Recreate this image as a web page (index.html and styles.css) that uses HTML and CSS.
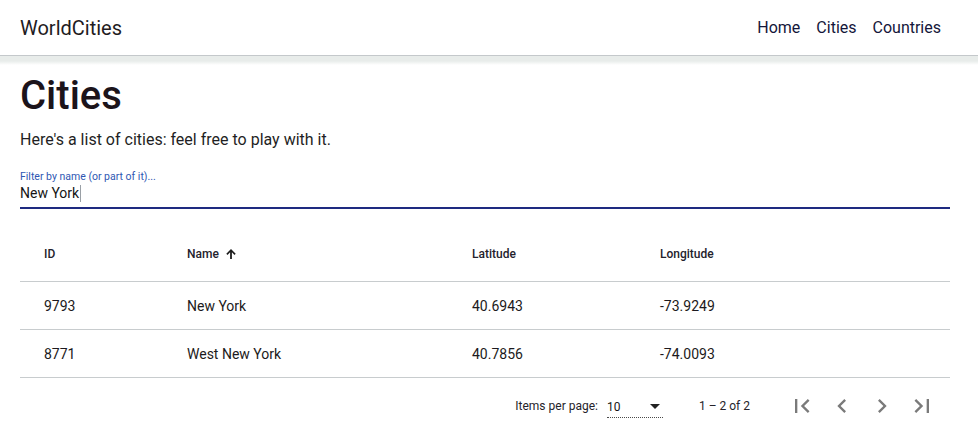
FILE: index.html
```html
<!DOCTYPE html>
<html lang="en">
<head>
<meta charset="utf-8">
<title>WorldCities</title>
<link rel="stylesheet" href="styles.css">
</head>
<body>
<header class="toolbar">
  <div class="brand">WorldCities</div>
  <nav class="nav">
    <a class="nav-link" href="#">Home</a>
    <a class="nav-link" href="#">Cities</a>
    <a class="nav-link" href="#">Countries</a>
  </nav>
</header>
<main class="content">
  <h1 class="title">Cities</h1>
  <p class="lead">Here's a list of cities: feel free to play with it.</p>
  <div class="field">
    <div class="field-label">Filter by name (or part of it)...</div>
    <div class="field-input">New York<span class="caret"></span></div>
  </div>
  <table class="grid">
    <colgroup>
      <col class="c-id"><col class="c-name"><col class="c-lat"><col class="c-lon">
    </colgroup>
    <thead>
      <tr>
        <th>ID</th>
        <th><span class="sort">Name<svg class="sort-arrow" viewBox="0 0 12 12" width="12" height="12"><path d="M6 1 L1.3 5.7 L2.5 6.9 L5.1 4.3 V11 H6.9 V4.3 L9.5 6.9 L10.7 5.7 Z" fill="#1d1d1d"/></svg></span></th>
        <th>Latitude</th>
        <th>Longitude</th>
      </tr>
    </thead>
    <tbody>
      <tr><td>9793</td><td>New York</td><td>40.6943</td><td>-73.9249</td></tr>
      <tr><td>8771</td><td>West New York</td><td>40.7856</td><td>-74.0093</td></tr>
    </tbody>
  </table>
  <div class="paginator">
    <span class="pg-label">Items per page:</span>
    <div class="pg-select"><span>10</span><span class="pg-arrow"></span></div>
    <span class="pg-range">1 – 2 of 2</span>
    <button class="pg-btn" aria-label="First page"><svg viewBox="0 0 24 24" width="28" height="28"><path d="M18.41 16.59L13.82 12l4.59-4.59L17 6l-6 6 6 6zM6 6h2v12H6z"/></svg></button>
    <button class="pg-btn" aria-label="Previous page"><svg viewBox="0 0 24 24" width="28" height="28"><path d="M15.41 7.41L14 6l-6 6 6 6 1.41-1.41L10.83 12z"/></svg></button>
    <button class="pg-btn" aria-label="Next page"><svg viewBox="0 0 24 24" width="28" height="28"><path d="M10 6L8.59 7.41 13.17 12l-4.58 4.59L10 18l6-6z"/></svg></button>
    <button class="pg-btn" aria-label="Last page"><svg viewBox="0 0 24 24" width="28" height="28"><path d="M5.59 7.41L10.18 12l-4.59 4.59L7 18l6-6-6-6zM16 6h2v12h-2z"/></svg></button>
  </div>
</main>
</body>
</html>
```
FILE: styles.css
```css
* { box-sizing: border-box; }
html, body { margin: 0; padding: 0; background: #fff; }
body {
  font-family: Roboto, "Liberation Sans", Arial, sans-serif;
  color: #1f1c22;
}
.toolbar {
  position: relative;
  height: 56px;
  display: flex;
  align-items: center;
  justify-content: space-between;
  padding: 0 37px 0 20px;
  border-bottom: 1px solid #c4c8cb;
}
.toolbar::after {
  content: "";
  position: absolute;
  left: 0; right: 0; top: 56px;
  height: 9px;
  background: linear-gradient(#e8ecea 0, #e8ecea 55%, rgba(232,236,234,0) 100%);
}
.brand { font-size: 20px; line-height: 24px; }
.nav { display: flex; gap: 16px; }
.nav-link { font-size: 16px; line-height: 24px; color: #14163a; text-decoration: none; }
.content { padding: 0 28px 0 20px; }
.title {
  font-size: 40px; font-weight: 500; line-height: 48px;
  margin: 16px 0 8px; color: #1c141b;
}
.lead { font-size: 16px; line-height: 24px; margin: 0 0 19px; color: #1f1f24; }
.field-label { font-size: 10.5px; line-height: 12px; color: #2f57b3; }
.field-input {
  margin-top: 2px;
  font-size: 14px; line-height: 17px;
  padding-bottom: 5px;
  border-bottom: 2px solid #1e2a80;
  color: #151515;
}
.caret { display: inline-block; width: 1px; height: 17px; background: #9aa0a6; vertical-align: top; margin-left: 1px; }
.grid {
  width: 100%;
  margin-top: 17px;
  border-collapse: separate;
  border-spacing: 0;
  table-layout: fixed;
}
.c-id { width: 167px; }
.c-name { width: 285px; }
.c-lat { width: 188px; }
.c-lon { width: 290px; }
.grid th, .grid td {
  text-align: left;
  padding: 0;
  border-bottom: 1px solid #c8ccce;
  vertical-align: middle;
}
.grid th:first-child, .grid td:first-child { padding-left: 24px; }
.grid th:last-child, .grid td:last-child { padding-right: 24px; }
.grid th { height: 56px; font-size: 12px; font-weight: 500; color: #24222c; }
.grid td { height: 48px; font-size: 14px; color: #1c1a20; }
.sort { display: inline-flex; align-items: center; }
.sort-arrow { margin-left: 6px; }
.paginator {
  display: flex;
  justify-content: flex-end;
  align-items: center;
  height: 56px;
  padding: 0 8px;
  font-size: 12px;
  color: #25232a;
}
.pg-label { margin-right: 9px; }
.pg-select {
  width: 56px;
  display: flex;
  align-items: center;
  justify-content: space-between;
  padding: 4px 3px 3px 0;
  margin-top: 1px;
  border-bottom: 1px dotted #4a4a4a;
  line-height: 14px;
  color: #151515;
}
.pg-arrow {
  width: 0; height: 0;
  border-left: 5px solid transparent;
  border-right: 5px solid transparent;
  border-top: 5px solid #222;
}
.pg-range { margin: 0 32px 0 36px; }
.pg-btn {
  width: 40px; height: 40px;
  padding: 0; border: 0; background: transparent;
  display: flex; align-items: center; justify-content: center;
  fill: #7a7a7a;
}
```
